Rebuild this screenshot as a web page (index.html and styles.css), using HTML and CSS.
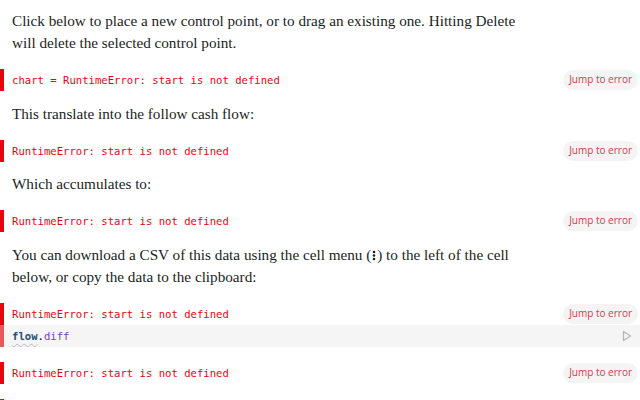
FILE: index.html
```html
<!DOCTYPE html>
<html>
<head>
<meta charset="utf-8">
<link rel="stylesheet" href="styles.css">
</head>
<body>
<div class="nb">
  <div class="cell prose">
    <p>Click below to place a new control point, or to drag an existing one. Hitting Delete will delete the selected control point.</p>
  </div>
  <div class="cell err">
    <span class="msg">chart = RuntimeError: start is not defined</span>
    <span class="jump">Jump to error</span>
  </div>
  <div class="cell prose">
    <p>This translate into the follow cash flow:</p>
  </div>
  <div class="cell err">
    <span class="msg">RuntimeError: start is not defined</span>
    <span class="jump">Jump to error</span>
  </div>
  <div class="cell prose">
    <p>Which accumulates to:</p>
  </div>
  <div class="cell err">
    <span class="msg">RuntimeError: start is not defined</span>
    <span class="jump">Jump to error</span>
  </div>
  <div class="cell prose">
    <p>You can download a CSV of this data using the cell menu (<svg class="menu" width="4" height="11" viewBox="0 0 4 11"><circle cx="2" cy="2" r="1.3" fill="#1b1e23"/><circle cx="2" cy="5.5" r="1.3" fill="#1b1e23"/><circle cx="2" cy="9" r="1.3" fill="#1b1e23"/></svg>) to the left of the cell below, or copy the data to the clipboard:</p>
  </div>
  <div class="cell err tight">
    <span class="msg">RuntimeError: start is not defined</span>
    <span class="jump">Jump to error</span>
  </div>
  <div class="cell code">
    <span class="src"><span class="var">flow</span>.<span class="prop">diff</span></span>
    <svg class="run" width="10" height="12" viewBox="0 0 10 12"><path d="M1.5 1.5 L8.5 6 L1.5 10.5 Z" fill="none" stroke="#b5b5b5" stroke-width="1.3" stroke-linejoin="round"/></svg>
  </div>
  <div class="cell err">
    <span class="msg">RuntimeError: start is not defined</span>
    <span class="jump">Jump to error</span>
  </div>
  <div class="cell err last">
    <span class="msg"></span>
    <span class="jump">Jump to error</span>
  </div>
</div>
</body>
</html>
```
FILE: styles.css
```css
html, body {
  margin: 0;
  padding: 0;
  background: #fff;
  overflow: hidden;
}
.nb {
  width: 640px;
  height: 400px;
  overflow: hidden;
  padding-top: 10px;
  box-sizing: border-box;
}
.cell {
  position: relative;
}
.prose {
  padding: 0 0 0 12px;
  width: 512px;
}
.prose p {
  margin: 0;
  font-family: "Liberation Serif", serif;
  font-size: 15.2px;
  line-height: 22px;
  color: #1b1e23;
}
.menu {
  display: inline-block;
  vertical-align: -1px;
  margin: 0 1px;
}
.err {
  display: flex;
  align-items: center;
  justify-content: space-between;
  height: 22px;
  margin: 15px 0 11.5px;
  border-left: 4px solid #e7040f;
  padding: 0 2px 0 8px;
}
.err.tight {
  margin-bottom: 0;
}
.msg {
  font-family: "DejaVu Sans Mono", monospace;
  font-size: 10.6px;
  color: #e7040f;
}
.jump {
  font-family: "Open Sans", sans-serif;
  font-size: 10px;
  color: #d0404b;
  background: #f5f4f4;
  border-radius: 10px;
  padding: 2px 6px 3px;
  line-height: 15px;
}
.code {
  display: flex;
  align-items: center;
  justify-content: space-between;
  height: 22px;
  background: #f5f5f5;
  border-left: 4px solid #e8575c;
  padding: 0 8px 0 8px;
  margin-bottom: 14px;
}
.src {
  font-family: "DejaVu Sans Mono", monospace;
  font-size: 10.6px;
}
.var {
  color: #1f4e79;
  font-weight: bold;
  text-decoration: underline wavy #b8b8c8 1px;
  text-underline-offset: 3px;
}
.prop {
  color: #6f42c1;
}
.run {
  display: block;
}
```
